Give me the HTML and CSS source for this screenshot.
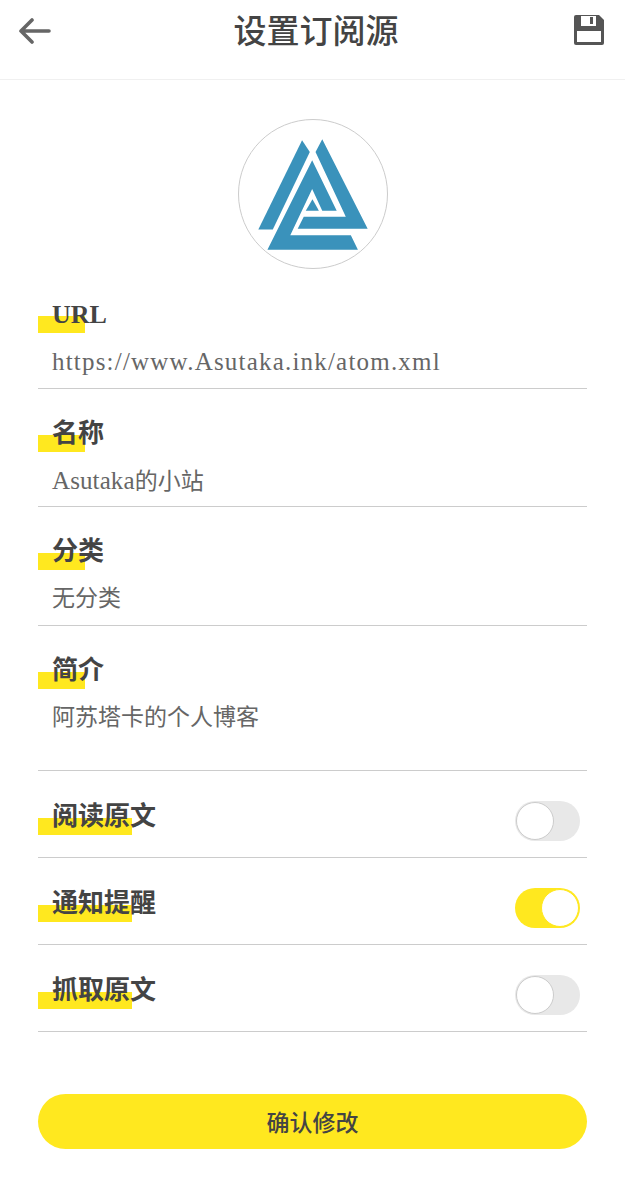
FILE: index.html
```html
<!DOCTYPE html>
<html lang="zh">
<head>
  <meta charset="UTF-8" />
  <title>设置订阅源</title>
  <link rel="stylesheet" href="styles.css">
</head>
<body>
  <header class="topbar">
    <svg class="icon back" width="32" height="26" viewBox="0 0 32 26"><path d="M13 2 L2 13 L13 24 M2 13 H30" fill="none" stroke="#666" stroke-width="3.6" stroke-linecap="round" stroke-linejoin="round"/></svg>
    <h1>设置订阅源</h1>
    <svg class="icon" width="32" height="32" viewBox="0 0 32 32"><path d="M3 1 H26 L31 6 V29 a2 2 0 0 1 -2 2 H3 a2 2 0 0 1 -2 -2 V3 a2 2 0 0 1 2 -2 Z" fill="#555"/><rect x="4" y="17" width="24" height="11" fill="#fff"/><rect x="8" y="2" width="15" height="10" fill="#fff"/><rect x="17" y="3" width="3" height="7" fill="#555"/></svg>
  </header>

  <div class="avatar">
    <svg width="148" height="148" viewBox="57.5 32.5 440 440">
      <g fill="#3a92bb">
        <polygon points="245,93 268,128 158,358 115,358"/>
        <polygon points="305,90 440,356 232,356 250,320 375,320 285,128"/>
        <polygon points="275,152 348,302 305,302 275,238 210,375 390,375 411,418 142,418"/>
        <polygon points="276,268 295,302 256,302"/>
      </g>
    </svg>
  </div>

  <form class="form">
    <div class="field">
      <label class="mark">URL</label>
      <div class="value url">https://www.Asutaka.ink/atom.xml</div>
    </div>
    <div class="field">
      <label class="mark">名称</label>
      <div class="value"><span class="latin">Asutaka</span>的小站</div>
    </div>
    <div class="field">
      <label class="mark">分类</label>
      <div class="value">无分类</div>
    </div>
    <div class="field tall">
      <label class="mark">简介</label>
      <div class="value">阿苏塔卡的个人博客</div>
    </div>

    <div class="switch-row">
      <label class="mark long">阅读原文</label>
      <div class="switch"></div>
    </div>
    <div class="switch-row">
      <label class="mark long">通知提醒</label>
      <div class="switch on"></div>
    </div>
    <div class="switch-row">
      <label class="mark long">抓取原文</label>
      <div class="switch"></div>
    </div>

    <button type="button" class="confirm">确认修改</button>
  </form>
</body>
</html>
```

FILE: styles.css
```css
body {
  margin: 0;
  background: #fff;
  font-family: "Liberation Serif", "Noto Sans CJK SC", serif;
  color: #444;
}
.topbar {
  height: 80px;
  border-bottom: 1px solid #f0f0f0;
  display: flex;
  justify-content: space-between;
  align-items: flex-start;
  padding: 14px 20px 0 19px;
  box-sizing: border-box;
}
.icon {
  display: block;
}
.back {
  margin-top: 4px;
}
.topbar h1 {
  margin: -5px 0 0 8px;
  font-family: "Noto Sans CJK SC", sans-serif;
  font-size: 33px;
  line-height: 40px;
  font-weight: 500;
  color: #444;
}
.avatar {
  width: 148px;
  height: 148px;
  margin: 39px auto 1px;
  border: 1px solid #ccc;
  border-radius: 50%;
  overflow: hidden;
}
.avatar svg {
  display: block;
}
.form {
  margin: 0 38px;
}
.field {
  height: 118.5px;
  padding-top: 27px;
  border-bottom: 1px solid #ccc;
  box-sizing: border-box;
}
.field.tall {
  height: 145px;
}
.mark {
  display: block;
  width: 80px;
  padding-left: 14px;
  font-size: 26px;
  font-weight: bold;
  line-height: 36px;
  white-space: nowrap;
  background: linear-gradient(#ffe81f, #ffe81f) no-repeat 0 19px / 47px 17px;
}
.mark.long {
  background-size: 94px 17px;
}
.value {
  padding-left: 14px;
  margin-top: 12px;
  font-size: 23px;
  line-height: 34px;
  color: #666;
}
.value.url {
  font-size: 25px;
  letter-spacing: 1.2px;
}
.latin {
  font-size: 25px;
  letter-spacing: 0.1px;
}
.switch-row {
  height: 87px;
  border-bottom: 1px solid #ccc;
  box-sizing: border-box;
  display: flex;
  justify-content: space-between;
  padding: 28px 7px 0 0;
}
.switch {
  width: 65px;
  height: 40px;
  margin-top: 2px;
  border-radius: 20px;
  background: #e8e8e8;
  position: relative;
}
.switch::after {
  content: "";
  position: absolute;
  left: 1px;
  top: 1px;
  width: 36px;
  height: 36px;
  border-radius: 50%;
  background: #fff;
  border: 1px solid #ccc;
}
.switch.on {
  background: #ffe81f;
}
.switch.on::after {
  left: auto;
  right: 1px;
  border-color: #ffe81f;
}
.confirm {
  display: block;
  width: 100%;
  height: 55px;
  margin-top: 62px;
  border: none;
  border-radius: 28px;
  background: #ffe81f;
  color: #444;
  font-family: "Noto Sans CJK SC", sans-serif;
  font-size: 23px;
  font-weight: 500;
}
```
